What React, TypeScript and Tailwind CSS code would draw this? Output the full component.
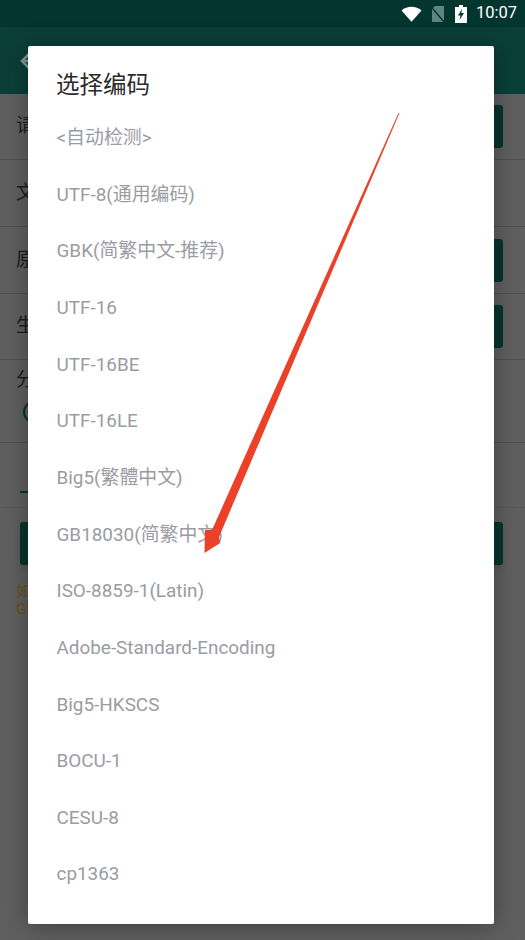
const encodings = [
  "<自动检测>",
  "UTF-8(通用编码)",
  "GBK(简繁中文-推荐)",
  "UTF-16",
  "UTF-16BE",
  "UTF-16LE",
  "Big5(繁體中文)",
  "GB18030(简繁中文)",
  "ISO-8859-1(Latin)",
  "Adobe-Standard-Encoding",
  "Big5-HKSCS",
  "BOCU-1",
  "CESU-8",
  "cp1363",
  "EUC-JP",
];

// 背景页面的一行
function Row({ label, button, height }: { label: string; button?: boolean; height: string }) {
  return (
    <div className={`flex items-center justify-between border-b border-[#4f4f4f] pl-4 pr-[22px] ${height}`}>
      <span className="text-[19px] text-[#1c1c1c]">{label}</span>
      {button && <div className="h-[43px] w-[100px] rounded-[3px] bg-[#06352f]" />}
    </div>
  );
}

export default function App() {
  return (
    <div
      className="relative h-[940px] w-[525px] overflow-hidden bg-[#5f5f5f]"
      style={{ fontFamily: '"Roboto", "Noto Sans CJK SC", sans-serif' }}
    >
      {/* 状态栏 */}
      <div className="flex h-[27px] items-center justify-end bg-[#043630] pr-2">
        <svg width="21" height="16" viewBox="0 0 21 16">
          <path d="M0.5 4.5C6 -0.5 15 -0.5 20.5 4.5L10.5 15.8Z" fill="#fff" />
        </svg>
        <svg className="ml-2" width="15" height="18" viewBox="0 0 15 18">
          <path d="M5 1H14V17H2V4Z" fill="#5e8581" />
          <path d="M0.5 1L14.5 17.5" stroke="#043630" strokeWidth="1.5" />
        </svg>
        <svg className="ml-[10px]" width="12" height="18" viewBox="0 0 12 18">
          <path d="M4 0H8V2H12V18H0V2H4Z" fill="#fff" />
          <path d="M7 4L3 10.5H5.5L4.5 15L9 8H6.3Z" fill="#043630" />
        </svg>
        <span className="ml-[9px] text-[16.5px] text-white">10:07</span>
      </div>

      {/* 标题栏 */}
      <div className="flex h-[67px] items-center bg-[#0a3f38] pl-5">
        <svg width="18" height="18" viewBox="0 0 18 18">
          <path d="M10 1L2 9L10 17M2 9H18" fill="none" stroke="#7f9c98" strokeWidth="2.5" />
        </svg>
      </div>

      {/* 背景内容 */}
      <Row label="请选择文件" button height="h-[66px]" />
      <Row label="文件编码" height="h-[67px]" />
      <Row label="原编码" button height="h-[67px]" />
      <Row label="生成编码" button height="h-[66px]" />
      <div className="h-[83px] border-b border-[#4f4f4f] pl-4 pt-[6px]">
        <div className="text-[19px] text-[#1c1c1c]">分隔符</div>
        <div className="mt-[6px] ml-[7px] h-[22px] w-[22px] rounded-full border-2 border-[#06352f]" />
      </div>
      <div className="flex h-[65px] items-center border-b border-[#585858] pl-5">
        <div className="mt-[33px] h-[2px] w-[100px] bg-[#06352f]" />
      </div>
      <div className="pt-[14px] pr-[22px] pl-5">
        <div className="h-[43px] rounded-[3px] bg-[#06352f] shadow-md" />
        <div className="mt-[17px] -ml-1 text-[15px] leading-[18px] text-[#6b4d1c]">
          <div>如果编码不正确</div>
          <div>GBK</div>
        </div>
      </div>

      {/* 选择编码对话框 */}
      <div className="absolute top-[46px] left-[28px] h-[878px] w-[466px] overflow-hidden rounded-[2px] bg-white shadow-[0_2px_24px_rgba(0,0,0,0.35)]">
        <div className="pt-[22px] pl-[28px] text-[23.5px] leading-[34px] text-[#2b2b2b]">选择编码</div>
        <div className="mt-[8px]">
          {encodings.map((name) => (
            <div key={name} className="flex h-[56.65px] items-center pl-[28.5px] text-[18.9px] text-[#9a9ca3]">
              {name}
            </div>
          ))}
        </div>
      </div>

      {/* 红色箭头标注 */}
      <svg className="absolute top-0 left-0" width="525" height="940" viewBox="0 0 525 940">
        <path d="M399.5 113L219 537L220 543L204.5 553L205 530L212 530L398.5 113Z" fill="#ea4128" />
      </svg>
    </div>
  );
}
